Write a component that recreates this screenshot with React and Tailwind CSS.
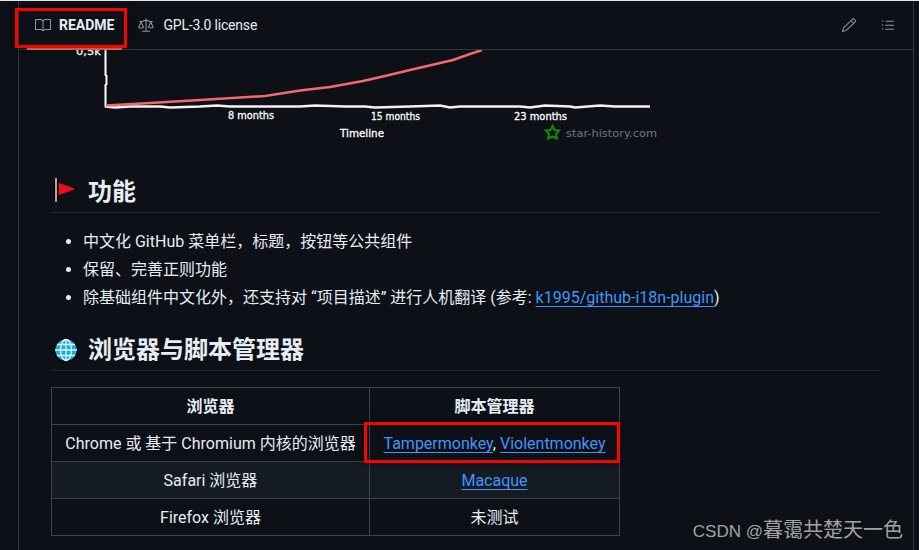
import React from 'react';
import { GoBook, GoLaw, GoPencil, GoListUnordered } from 'react-icons/go';

const cell = 'border border-[#3d444d] px-[13px] pt-[7px] pb-[5px] text-center';
const link = 'text-[#4493f8] underline underline-offset-[3px]';
const chartLabel = "fill-white stroke-white stroke-[0.3] font-['DejaVu_Sans',sans-serif] text-[11px]";

const StarChart = () => (
  <svg viewBox="51 50 830 101" className="block w-[830px] h-[101px] mb-6">
    <text x="76" y="55" textLength="25" lengthAdjust="spacingAndGlyphs" className={chartLabel}>0,5k</text>
    <polyline
      points="105.5,50 105.5,75 106.5,76 106.5,84 105.5,85 105.5,107"
      fill="none"
      stroke="#fff"
      strokeWidth="2"
    />
    <polyline
      points="105,106.5 115,107.5 130,106.5 160,106.5 170,107.5 200,106.5 217,105.5 230,106.5 260,106.5 300,106.5 315,105.5 345,106.5 365,106.5 375,107.5 410,106.5 440,105.5 450,107.5 460,106.5 520,106.5 530,107.5 545,105.5 570,106.5 575,107.5 600,105.5 615,106.5 650,106.5"
      fill="none"
      stroke="#f2f2f2"
      strokeWidth="2.5"
    />
    <polyline
      points="106,105.5 150,103 200,100 265,96 300,90.5 330,87 363,81 385,76 410,70 453,60 470,54 482,50"
      fill="none"
      stroke="#f26a6a"
      strokeWidth="2.5"
    />
    <text x="228" y="119" textLength="46" lengthAdjust="spacingAndGlyphs" className={chartLabel}>8 months</text>
    <text x="371" y="120" textLength="49" lengthAdjust="spacingAndGlyphs" className={chartLabel}>15 months</text>
    <text x="514" y="120" textLength="53" lengthAdjust="spacingAndGlyphs" className={chartLabel}>23 months</text>
    <text x="340" y="137" textLength="44" lengthAdjust="spacingAndGlyphs" className={chartLabel}>Timeline</text>
    <path
      d="M552.5 126 L554.5 130 L559 130.5 L556 134 L557 138.5 L552.5 136.5 L548 138.5 L549 134 L546 130.5 L550.5 130 Z"
      fill="none"
      stroke="#128a12"
      strokeWidth="2"
    />
    <text x="566" y="137" textLength="91" lengthAdjust="spacingAndGlyphs" className="fill-[#6e7681] font-['DejaVu_Sans',sans-serif] text-[11px]">
      star-history.com
    </text>
  </svg>
);

const Flag = () => (
  <svg viewBox="0 0 28 28" className="w-7 h-7 shrink-0 overflow-visible">
    <rect x="3" y="1" width="4" height="26" fill="#000" />
    <rect x="4" y="2" width="2" height="24" fill="#aaa" />
    <path d="M7 6 L26 13 L7 20 Z" fill="#e8101f" stroke="#000" strokeWidth="1" />
  </svg>
);

const Globe = () => (
  <svg viewBox="0 0 28 28" className="w-7 h-7 shrink-0 overflow-visible">
    <circle cx="15" cy="16" r="11.5" fill="#18aee6" stroke="#000" strokeWidth="1.5" />
    <g fill="none" stroke="#dff6ff" strokeWidth="1.3">
      <ellipse cx="15" cy="16" rx="5.5" ry="10.5" />
      <path d="M15 5.5 V26.5 M4 16 H26 M6 10.5 H24 M6 21.5 H24" />
    </g>
  </svg>
);

const Heading = ({ icon, children }) => (
  <h2 className="flex items-center gap-[9px] text-2xl leading-[30px] font-bold border-b border-[#21262d] pb-[7px] mb-4 text-[#e6edf3]">
    {icon}
    <span className="translate-y-[2px]">{children}</span>
  </h2>
);

const App = () => {
  return (
    <div className="relative w-[919px] h-[550px] overflow-hidden bg-[#0d1117] border-t border-[#e4e4e4] text-[#e6edf3] text-base leading-6 font-['Roboto','Noto_Sans_CJK_SC',sans-serif]">
      <div className="ml-[18px] w-[896px] h-full border-x border-[#30363d]">
        <div className="flex items-stretch h-[49px] pl-2 pr-4 border-b border-[#30363d] text-sm">
          <div className="flex items-center gap-2 px-2 -mb-px border-b-2 border-[#f78166] font-bold">
            <GoBook size={16} className="text-[#9198a1]" />
            <span>README</span>
          </div>
          <div className="flex items-center gap-[9px] ml-2 px-2">
            <GoLaw size={16} className="text-[#9198a1]" />
            <span className="tracking-[-0.2px]">GPL-3.0 license</span>
          </div>
          <div className="flex items-center gap-[23px] ml-auto mr-[1px] text-[#9198a1]">
            <GoPencil size={16} />
            <GoListUnordered size={16} />
          </div>
        </div>

        <div className="px-8 overflow-hidden">
          <StarChart />
          <Heading icon={<Flag />}>功能</Heading>
          <ul className="list-disc pl-8 mb-6 translate-y-px">
            <li>中文化 GitHub 菜单栏，标题，按钮等公共组件</li>
            <li className="mt-1">保留、完善正则功能</li>
            <li className="mt-1">
              除基础组件中文化外，还支持对 “项目描述” 进行人机翻译 (参考:{' '}
              <a className={link}>k1995/github-i18n-plugin</a>)
            </li>
          </ul>
          <Heading icon={<Globe />}>浏览器与脚本管理器</Heading>
          <table>
            <thead>
              <tr>
                <th className={`${cell} font-bold w-[318px]`}>浏览器</th>
                <th className={`${cell} font-bold w-[250px]`}>脚本管理器</th>
              </tr>
            </thead>
            <tbody>
              <tr>
                <td className={cell}>Chrome 或 基于 Chromium 内核的浏览器</td>
                <td className={cell}>
                  <a className={link}>Tampermonkey</a>, <a className={link}>Violentmonkey</a>
                </td>
              </tr>
              <tr className="bg-[#151b23]">
                <td className={cell}>Safari 浏览器</td>
                <td className={cell}>
                  <a className={link}>Macaque</a>
                </td>
              </tr>
              <tr>
                <td className={cell}>Firefox 浏览器</td>
                <td className={cell}>未测试</td>
              </tr>
            </tbody>
          </table>
        </div>
      </div>

      {/* red annotation boxes + watermark sit on top of the page */}
      <div className="absolute left-[15px] top-[7px] w-[112px] h-[40px] border-[3px] border-[#ff0000] shadow-[0_0_6px_rgba(0,0,0,0.6)]" />
      <div className="absolute left-[364px] top-[421px] w-[256px] h-[41px] border-[3px] border-[#ff0000] shadow-[0_0_6px_rgba(0,0,0,0.6)]" />
      <div className="absolute right-[16px] top-[515px] text-[20px] leading-7 text-[#a3a3a3] font-['Liberation_Sans','Noto_Sans_CJK_SC',sans-serif]">
        <span className="text-[17px]">CSDN @</span>暮霭共楚天一色
      </div>
    </div>
  );
};

export default App;
